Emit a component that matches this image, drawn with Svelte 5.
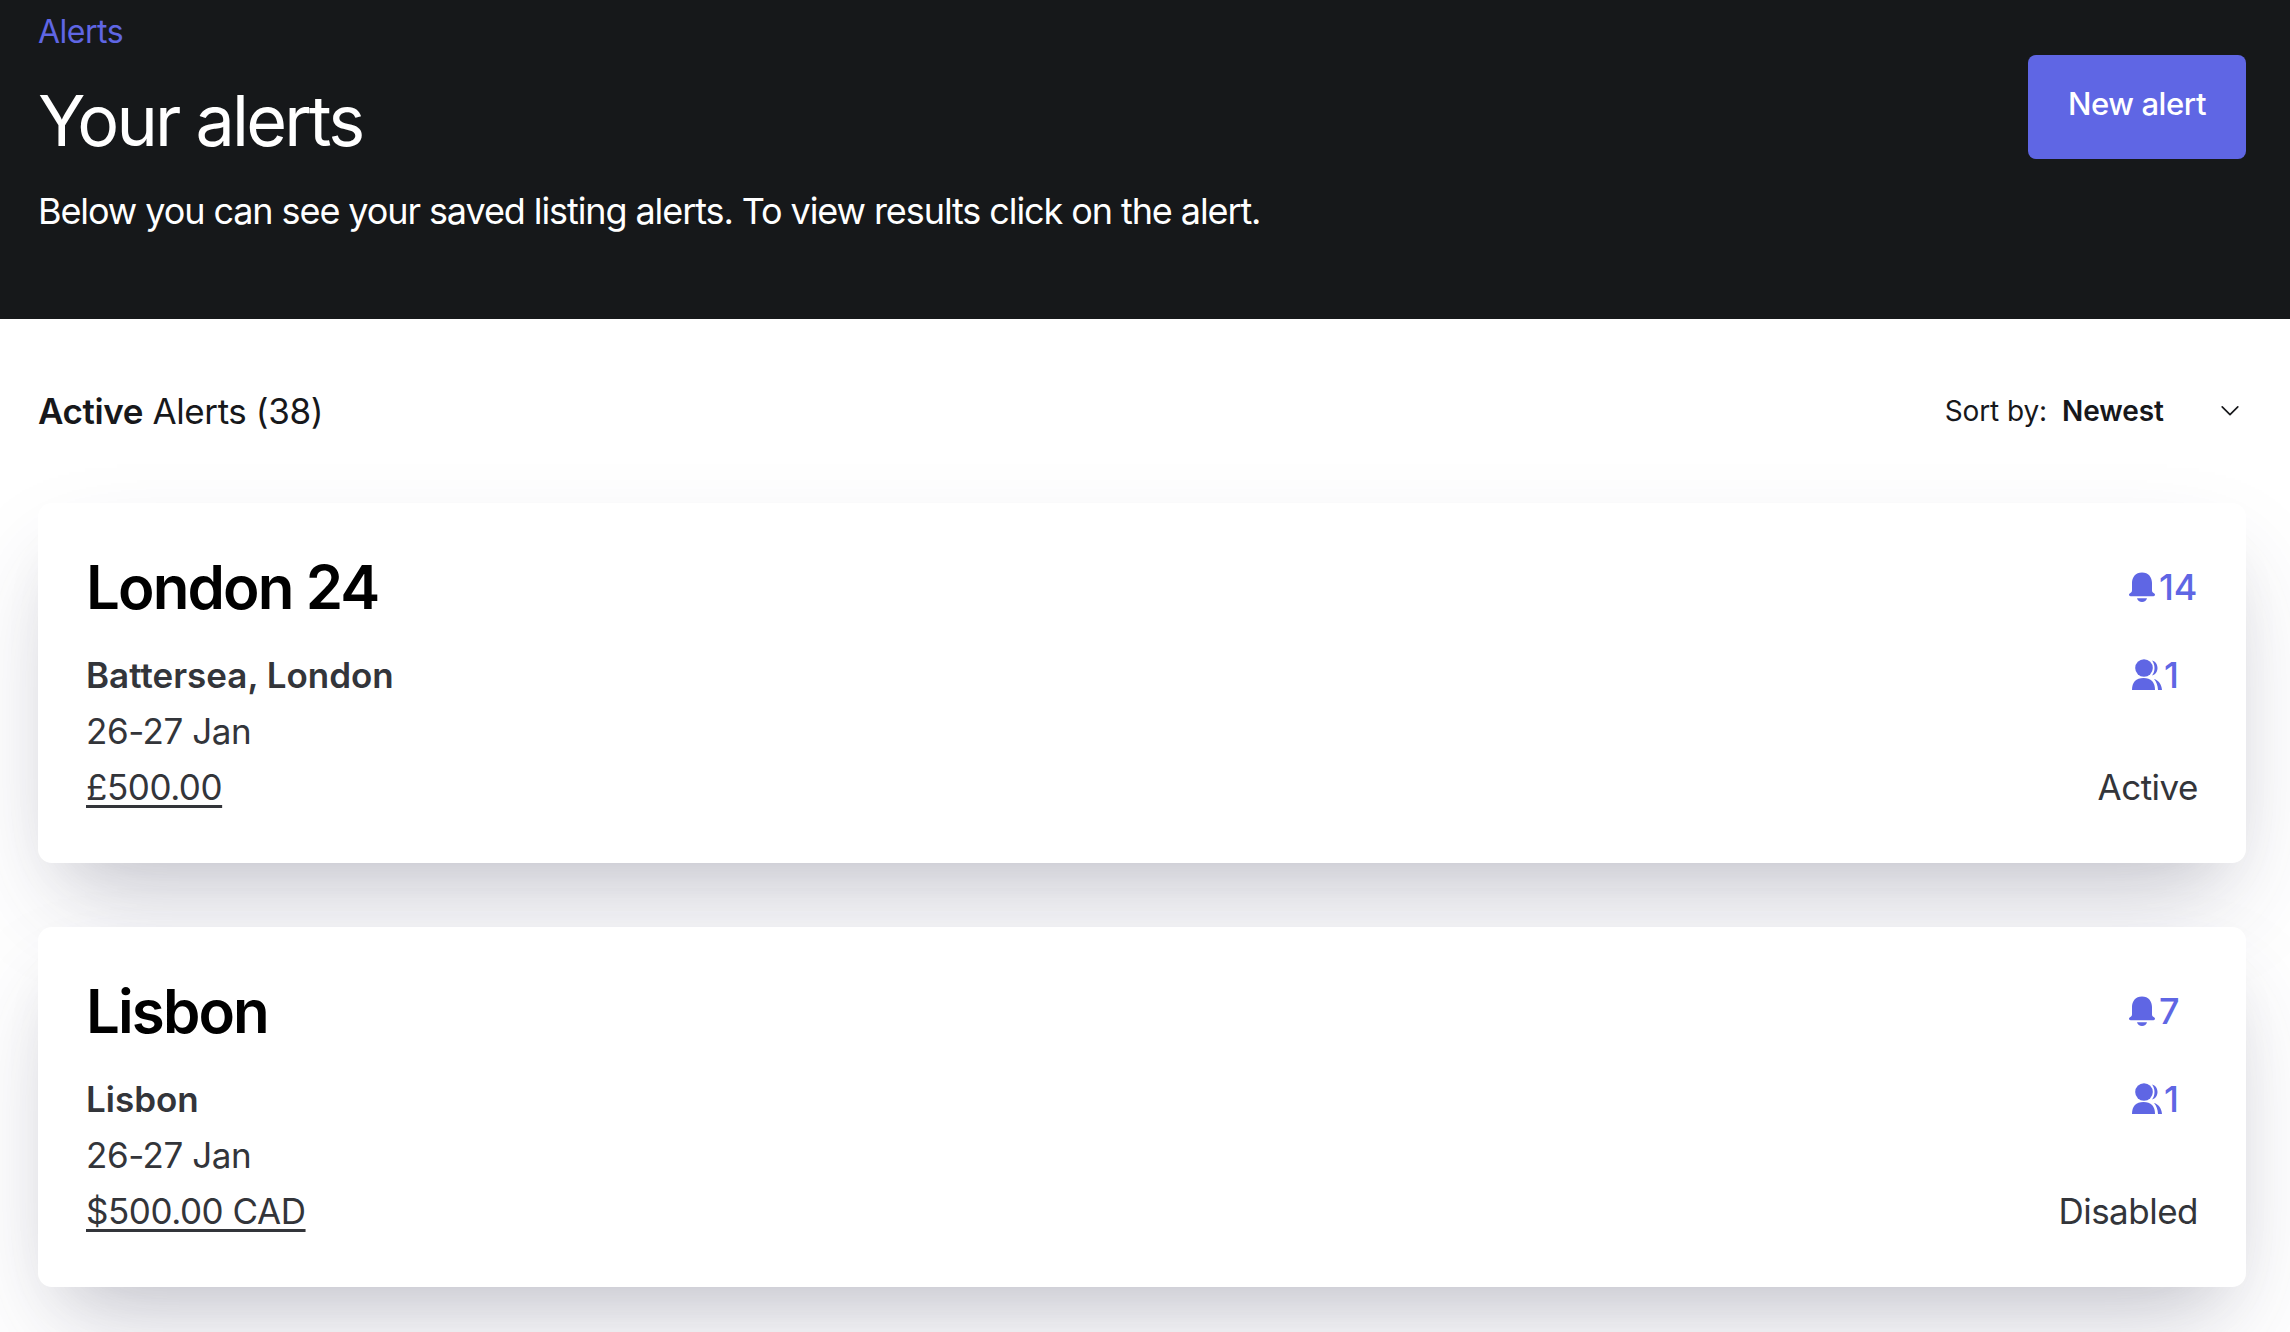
<script>
  const alerts = [
    { name: 'London 24', place: 'Battersea, London', dates: '26-27 Jan', price: '£500.00', bells: 14, users: 1, status: 'Active' },
    { name: 'Lisbon', place: 'Lisbon', dates: '26-27 Jan', price: '$500.00 CAD', bells: 7, users: 1, status: 'Disabled' }
  ];
</script>

<div class="page">
  <header class="hero">
    <div>
      <a class="crumb" href="#alerts">Alerts</a>
      <h1>Your alerts</h1>
      <p>Below you can see your saved listing alerts. To view results click on the alert.</p>
    </div>
    <button class="new">New alert</button>
  </header>

  <main class="content">
    <div class="toolbar">
      <div class="count"><strong>Active</strong> Alerts (38)</div>
      <div class="sort">
        <span>Sort by:</span>
        <b>Newest</b>
        <svg viewBox="0 0 20 20" width="24" height="24" fill="none" stroke="#17181b" stroke-width="1.4" stroke-linecap="round" stroke-linejoin="round"><path d="M3.5 6.500l6.500 6.500L16.500 6.500" /></svg>
      </div>
    </div>

    <div class="list">
      {#each alerts as alert}
        <article class="card">
          <div class="info">
            <h2>{alert.name}</h2>
            <div class="place">{alert.place}</div>
            <div class="line">{alert.dates}</div>
            <div class="line price">{alert.price}</div>
          </div>
          <div class="side">
            <div class="stats">
              <div class="stat bell-row">
                <svg viewBox="0 0 26 30" width="26" height="30" fill="#5f66e4"><path d="M13 .5C6.500.5 3 5.200 3 11v7.200c0 1.300-.6 2.200-1.600 2.800-1 .5-1.400 1.200-1.400 1.800 0 .9.700 1.400 1.600 1.400h22.800c.9 0 1.600-.5 1.600-1.400 0-.6-.4-1.300-1.400-1.800-1-.6-1.600-1.500-1.600-2.800V11C23 5.200 19.500.5 13 .5z"/><path d="M8 26.200h10c-.5 2.300-2.500 3.800-5 3.800s-4.500-1.500-5-3.800z"/></svg>
                <span>{alert.bells}</span>
              </div>
              <div class="stat user-row">
                <svg viewBox="0 0 32 32" width="32" height="32" fill="#5f66e4"><circle cx="13" cy="9" r="8.800"/><path d="M1 31c0-8 4-12 11.500-12S24 23 24 31z"/><path d="M21 1.500c3.500.8 5.500 3.800 5.500 7.500s-2 6.700-5.500 7.500c1.500-2 2.500-4.500 2.500-7.500s-1-5.500-2.500-7.500z"/><path d="M23 20c4.500 1.300 7.500 5 8 11h-4c-.2-4.500-1.500-8-4-11z"/></svg>
                <span>{alert.users}</span>
              </div>
            </div>
            <div class="status">{alert.status}</div>
          </div>
        </article>
      {/each}
    </div>
  </main>
</div>

<style>
  :global(body) {
    margin: 0;
    background: #fff;
    font-family: Inter, "Liberation Sans", sans-serif;
  }

  .page {
    height: 1332px;
    overflow: hidden;
  }

  .hero {
    height: 319px;
    box-sizing: border-box;
    background: #16181a;
    padding: 12px 44px 0 38px;
    display: flex;
    justify-content: space-between;
    align-items: flex-start;
    color: #fff;
  }

  .crumb {
    display: block;
    color: #5f66e4;
    font-size: 32px;
    letter-spacing: -0.5px;
    line-height: 40px;
    text-decoration: none;
  }

  h1 {
    margin: 29px 0 0;
    font-size: 70px;
    font-weight: 400;
    letter-spacing: -2.8px;
    line-height: 80px;
  }

  .hero p {
    margin: 26px 0 0;
    font-size: 36px;
    letter-spacing: -1.09px;
    line-height: 48px;
  }

  .new {
    margin-top: 43px;
    width: 218px;
    height: 104px;
    padding: 0 0 8px;
    border: none;
    border-radius: 8px;
    background: #5f66e4;
    color: #fff;
    font: 500 31px Inter, sans-serif;
    letter-spacing: -0.4px;
  }

  .content {
    padding: 0 44px 0 38px;
  }

  .toolbar {
    display: flex;
    justify-content: space-between;
    align-items: center;
    height: 184px;
  }

  .count {
    font-size: 35px;
    letter-spacing: -0.4px;
    color: #17181b;
  }

  .count strong {
    font-weight: 600;
  }

  .sort {
    display: flex;
    align-items: center;
    font-size: 28px;
    letter-spacing: -0.1px;
    color: #17181b;
    padding-right: 4px;
  }

  .sort b {
    margin-left: 15px;
    width: 156px;
    font-weight: 600;
  }

  .list {
    display: flex;
    flex-direction: column;
    gap: 64px;
  }

  .card {
    height: 360px;
    box-sizing: border-box;
    padding: 47px 48px 48px;
    background: #fff;
    border-radius: 14px;
    display: flex;
    justify-content: space-between;
    box-shadow: 0 50px 100px -20px rgba(50, 50, 93, 0.22), 0 30px 60px -30px rgba(0, 0, 0, 0.12);
  }

  h2 {
    margin: 1px 0 0;
    font-size: 60px;
    font-weight: 600;
    letter-spacing: -1.9px;
    line-height: 72px;
    color: #000;
  }

  .place {
    margin-top: 24px;
    font-size: 35px;
    font-weight: 600;
    line-height: 56px;
    color: #33353a;
  }

  .line {
    font-size: 35px;
    letter-spacing: -0.45px;
    line-height: 56px;
    color: #33353a;
  }

  .price {
    text-decoration: underline;
    text-underline-offset: 5px;
  }

  .side {
    display: flex;
    flex-direction: column;
    align-items: flex-end;
    justify-content: space-between;
  }

  .stats {
    width: 69px;
    display: flex;
    flex-direction: column;
    gap: 40px;
    padding-top: 13px;
  }

  .stat {
    display: flex;
    align-items: center;
    gap: 4px;
    height: 48px;
    font-size: 36px;
    font-weight: 500;
    letter-spacing: -0.3px;
    color: #5f66e4;
    white-space: nowrap;
  }

  .user-row svg {
    margin-left: 2px;
  }

  .user-row {
    gap: 1px;
  }

  .status {
    font-size: 35px;
    letter-spacing: -0.5px;
    line-height: 56px;
    color: #33353a;
    margin-bottom: 0;
  }
</style>
